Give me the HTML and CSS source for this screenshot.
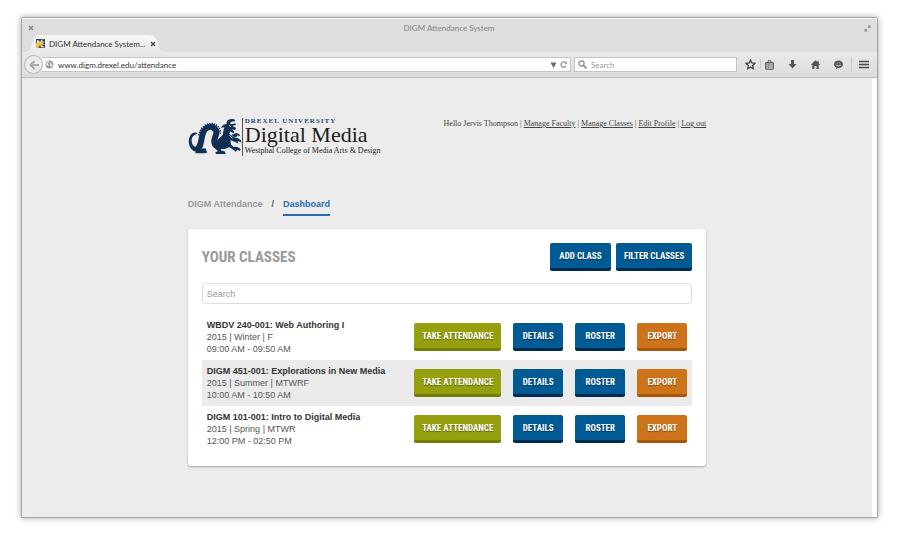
FILE: index.html
```html
<!DOCTYPE html>
<html lang="en">
<head>
<meta charset="utf-8">
<title>DIGM Attendance System</title>
<link rel="stylesheet" href="styles.css">
</head>
<body>
<div class="window">
  <header class="chrome">
    <div class="titlebar">
      <button class="icon-button" aria-label="Close window"><svg width="6" height="6" viewBox="0 0 6 6"><path d="M1 1l4 4M5 1L1 5" stroke="#858585" stroke-width="1.4"/></svg></button>
      <span class="window-title">DIGM Attendance System</span>
      <button class="icon-button" aria-label="Expand window"><svg width="7" height="7" viewBox="0 0 7 7" fill="#929292"><path d="M4 .5h2.500v2.500h-2.500zM.5 4h2.500v2.500h-2.500z"/></svg></button>
    </div>
    <div class="tabs">
      <div class="tab">
        <svg class="tab-shape" viewBox="0 0 138 17" preserveAspectRatio="none"><defs><linearGradient id="tabfill" x2="0" y2="1"><stop stop-color="#f8f8f8"/><stop offset="1" stop-color="#e9e9e9"/></linearGradient></defs><path d="M0 17C5 16 5 12 7 6Q9 0 14 0H123Q129 0 131 6C133 12 133 16 138 17Z" fill="url(#tabfill)"/></svg>
        <svg class="favicon" width="9" height="9" viewBox="0 0 9 9"><rect width="9" height="9" fill="#16458f"/><path d="M0 8C0 5 0 3 2 2.500L4 3 5 1 8 0 6 2 9 3 6.500 4 9 6 5.500 5.500 9 8.500H5L4 6 2.500 9H0Z" fill="#f3c545"/><path d="M1 1l3 1-3 2zM5 4l3 1" fill="#fff5bd"/></svg>
        <span class="tab-label">DIGM Attendance System...</span>
        <button class="icon-button" aria-label="Close tab"><svg width="6" height="6" viewBox="0 0 6 6"><path d="M1 1l4 4M5 1L1 5" stroke="#484848" stroke-width="1.400"/></svg></button>
      </div>
    </div>
    <div class="toolbar">
      <button class="back" aria-label="Back"><svg width="10" height="10" viewBox="0 0 10 10"><path d="M5.500 1L1.500 5l4 4M2 5h8" fill="none" stroke="#aaa" stroke-width="2.200"/></svg></button>
      <div class="address">
        <svg width="9" height="9" viewBox="0 0 9 9"><circle cx="4.500" cy="4.500" r="4" fill="#9b9b9b"/><path d="M3 .8L4 2 2.500 3.500 4 5 3 6 1 4M5.500 2l1.500 1-1 1 2 1-1.500 2L5 6" fill="#eee"/></svg>
        <input class="url" type="text" aria-label="Address" value="www.digm.drexel.edu/attendance">
        <svg width="5" height="6" viewBox="0 0 5 6"><path d="M0 .5h5v1L2.500 6 0 1.500z" fill="#6d6d6d"/></svg>
        <button class="icon-button" aria-label="Reload"><svg width="7" height="7" viewBox="0 0 7 7"><path d="M5.500 1.500A2.700 2.700 0 1 0 6 5" fill="none" stroke="#8796a8" stroke-width="1.300"/><path d="M7 .2v3H4z" fill="#8796a8"/></svg></button>
      </div>
      <div class="web-search">
        <svg width="9" height="9" viewBox="0 0 9 9" fill="none" stroke="#8a8a8a"><circle cx="3.500" cy="3.500" r="2.600" stroke-width="1.200"/><path d="M5.500 5.500l3 3" stroke-width="1.700"/></svg>
        <input type="text" aria-label="Search the web" placeholder="Search">
      </div>
      <div class="tools">
        <button class="icon-button" aria-label="Bookmark"><svg width="11" height="11" viewBox="0 0 11 11"><path d="M5.500 1l1.300 3 3.200.3-2.400 2.200.7 3.200-2.800-1.700-2.800 1.700.7-3.200L1 4.300 4.200 4z" fill="none" stroke="#444" stroke-width="1.300"/></svg></button>
        <button class="icon-button" aria-label="Bookmarks list"><svg width="9" height="10" viewBox="0 0 9 10"><path d="M3 2V.7h3V2" fill="none" stroke="#666"/><rect x=".6" y="2.600" width="7.800" height="6.600" rx=".8" fill="#c8c8c8" stroke="#5c5c5c" stroke-width="1.100"/><path d="M1 4.800h7M1 7h7M3.300 3v6" stroke="#777" stroke-width=".7"/></svg></button>
        <button class="icon-button" aria-label="Downloads"><svg width="9" height="9" viewBox="0 0 9 9"><path d="M3 0h3v4h2.500l-4 4.500-4-4.500H3z" fill="#555"/></svg></button>
        <button class="icon-button" aria-label="Home"><svg width="9" height="9" viewBox="0 0 9 9"><path d="M4.500.3L6.500 2V.8h1.200v2.400L9 4.500 8.200 5.200 7.700 4.800V9H5.500V6h-2v3H1.300V4.800L.8 5.200 0 4.500z" fill="#555"/></svg></button>
        <button class="icon-button" aria-label="Chat"><svg width="9" height="9" viewBox="0 0 9 9"><path d="M4.500.6C7 .6 9 2 9 4.300S7 8 4.500 8L2 9l.3-1.500C.8 7 0 5.900 0 4.300 0 2 2 .6 4.500.6z" fill="#555"/><path d="M2.700 3h1M5.300 3h1M2.200 5q2.300 2 4.600 0" fill="none" stroke="#e5e5e5" stroke-width=".9"/></svg></button>
        <button class="icon-button menu" aria-label="Menu"><svg width="10" height="9" viewBox="0 0 10 9"><path d="M0 1.500h10M0 4.500h10M0 7.500h10" stroke="#4a4a4a" stroke-width="1.700"/></svg></button>
      </div>
    </div>
  </header>

  <div class="viewport">
    <main class="page">
      <div class="masthead">
        <div class="logo">
          <svg class="dragon" width="54" height="38" viewBox="22 36 162 114" role="img" aria-label="Drexel dragon">
            <g fill="#102f53">
              <path d="M51 84C46 76 32 80 27 92C21 107 25 126 38 134L46 137L43 142H75L73 136L64 133L58 121C46 129 34 120 33 106C32 91 42 84 51 84Z"/>
              <path d="M140 72L130 64L120 66L128 56L138 54C136 46 142 40 152 39L161 40L164 45L153 47L147 51L152 55L164 52L165 57L155 60L167 66L163 72L154 70L161 77L158 82L148 76L146 83L158 93L172 97L181 103L182 110L175 106L170 107L174 113L165 109L156 105L150 103L150 112L158 122L170 123L180 129L178 135L170 131L165 137L158 131L146 124L130 130L119 126L122 134L132 136L135 144H106L104 139L112 136L104 128L103 110Z"/>
              <path d="M153 86L168 81L176 85L179 91L171 88L167 93L158 92ZM62 128L74 127L80 140H64Z"/>
            </g>
            <path d="M46 131C62 126 60 105 65 88C70 64 89 57 101 67C117 80 98 94 101 109C104 126 127 124 135 108C141 94 130 84 140 68" fill="none" stroke="#102f53" stroke-width="18"/>
            <path d="M54 88C60 64 76 52 93 53C111 54 120 68 119 83" fill="none" stroke="#102f53" stroke-width="5" stroke-dasharray="4 3"/>
            <path d="M127 72q-6 7-3 15M145 59l6 3M147 88l8 9M151 115l8 4" fill="none" stroke="#ececec" stroke-width="3"/>
          </svg>
          <div class="logo-text">
            <span class="university">DREXEL UNIVERSITY</span>
            <span class="program">Digital Media</span>
            <span class="college">Westphal College of Media Arts &amp; Design</span>
          </div>
        </div>
        <nav class="account">Hello Jervis Thompson | <a href="#faculty">Manage Faculty</a> | <a href="#classes">Manage Classes</a> | <a href="#profile">Edit Profile</a> | <a href="#logout">Log out</a></nav>
      </div>

      <nav class="breadcrumb" aria-label="Breadcrumb">
        <a href="#home">DIGM Attendance</a><span>/</span><a class="current" href="#dashboard" aria-current="page">Dashboard</a>
      </nav>

      <section class="card">
        <div class="card-head">
          <h1>YOUR CLASSES</h1>
          <div class="head-actions">
            <button class="btn blue">ADD CLASS</button>
            <button class="btn blue">FILTER CLASSES</button>
          </div>
        </div>
        <input class="filter" type="text" aria-label="Search classes" placeholder="Search">
        <table class="classes">
          <tr>
            <td><strong>WBDV 240-001: Web Authoring I</strong><br>2015 | Winter | F<br>09:00 AM - 09:50 AM</td>
            <td><div class="actions"><button class="btn green">TAKE ATTENDANCE</button><button class="btn blue">DETAILS</button><button class="btn blue">ROSTER</button><button class="btn orange">EXPORT</button></div></td>
          </tr>
          <tr>
            <td><strong>DIGM 451-001: Explorations in New Media</strong><br>2015 | Summer | MTWRF<br>10:00 AM - 10:50 AM</td>
            <td><div class="actions"><button class="btn green">TAKE ATTENDANCE</button><button class="btn blue">DETAILS</button><button class="btn blue">ROSTER</button><button class="btn orange">EXPORT</button></div></td>
          </tr>
          <tr>
            <td><strong>DIGM 101-001: Intro to Digital Media</strong><br>2015 | Spring | MTWR<br>12:00 PM - 02:50 PM</td>
            <td><div class="actions"><button class="btn green">TAKE ATTENDANCE</button><button class="btn blue">DETAILS</button><button class="btn blue">ROSTER</button><button class="btn orange">EXPORT</button></div></td>
          </tr>
        </table>
      </section>
    </main>
  </div>
</div>
</body>
</html>
```
FILE: styles.css
```css
* { box-sizing: border-box; }

body {
  margin: 0;
  padding: 17px 22px 27px 21px;
  min-height: 100vh;
  display: flex;
  background: #fff;
  font: 9px/12px "Liberation Sans", sans-serif;
  color: #555;
}

button, input { font: inherit; color: inherit; }
svg { display: block; flex: none; }

.window {
  flex: 1;
  display: flex;
  flex-direction: column;
  border: 1px solid #a6a6a6;
  border-radius: 2px 2px 0 0;
  box-shadow: 0 0 6px rgba(0, 0, 0, 0.35);
  min-width: 0;
}

.chrome {
  background: #dedede;
  border-top: 1px solid #f4f4f4;
  font: 8px/12px Lato, sans-serif;
}

.icon-button { border: 0; padding: 0; background: none; }

.titlebar {
  display: flex;
  align-items: center;
  justify-content: space-between;
  height: 16px;
  padding: 2px 6px 0;
  color: #858585;
}

.tabs { display: flex; height: 17px; padding-left: 4px; }

.tab {
  position: relative;
  display: flex;
  align-items: center;
  gap: 4px;
  width: 138px;
  padding: 0 12px 0 10px;
  color: #333;
}

.tab > * { position: relative; }
.tab .tab-shape { position: absolute; inset: 0; width: 100%; height: 100%; }
.tab-label { flex: 1; white-space: nowrap; }

.toolbar {
  display: flex;
  align-items: center;
  height: 26px;
  padding: 0 8px 0 2px;
  background: linear-gradient(#e9e9e9, #dcdcdc);
  border-bottom: 1px solid #bcbcbc;
}

.back {
  position: relative;
  flex: none;
  display: grid;
  place-items: center;
  width: 19px;
  height: 19px;
  padding: 0;
  border: 1px solid #b4b4b4;
  border-radius: 50%;
  background: #ebebeb;
}

.address, .web-search {
  display: flex;
  align-items: center;
  gap: 4px;
  height: 15px;
  padding: 0 3px;
  background: #fff;
  border: 1px solid #c4c4c4;
}

.address { flex: 1; margin-left: -1px; margin-right: 3px; border-left: 0; }
.web-search { flex: 0 1 163px; color: #888; }

.address input, .web-search input {
  flex: 1;
  min-width: 0;
  height: 12px;
  padding: 0;
  border: 0;
  background: none;
  outline: 0;
}

.address input { color: #333; }
input::placeholder { color: #999; opacity: 1; }

.tools { display: flex; align-items: center; gap: 14px; padding-left: 8px; }
.tools > :first-child { margin-right: -10px; padding-right: 4px; border-right: 1px solid #c8cdd2; }
.tools .menu { margin-left: -6px; padding: 3px 0 3px 7px; border-left: 1px solid #c8cdd2; }

.viewport {
  flex: 1;
  background: #ececec;
  border-right: 5px solid #fff;
}

.page { width: 61%; min-width: 518px; margin: 0 auto; padding: 40px 0; }

.masthead { display: flex; justify-content: space-between; align-items: flex-start; }
.logo { display: flex; }

.logo-text {
  display: flex;
  flex-direction: column;
  padding-left: 2px;
  border-left: 1px solid #555;
  font-family: "Liberation Serif", serif;
  color: #1d1d1d;
  white-space: nowrap;
}

.university { font-size: 7px; line-height: 6px; font-weight: bold; letter-spacing: 1px; color: #294b74; }
.program { font-size: 22px; line-height: 22px; }
.college { font-size: 8px; line-height: 10px; }

.account { font: 8px/12px "Liberation Serif", serif; color: #444; }
.account a { color: inherit; }

.breadcrumb {
  display: flex;
  gap: 9px;
  margin-top: 42px;
  font-weight: bold;
}

.breadcrumb a { padding-bottom: 4px; color: #999; text-decoration: none; }
.breadcrumb .current { color: #286bab; border-bottom: 2px solid #286bab; }

.card {
  margin-top: 13px;
  padding: 14px;
  background: #fff;
  border-radius: 3px;
  box-shadow: 0 1px 2px rgba(0, 0, 0, 0.3);
}

.card-head { display: flex; justify-content: space-between; align-items: center; }

h1 {
  margin: 0;
  font: bold 15px/24px "Roboto Condensed", "Liberation Sans Narrow", sans-serif;
  color: #999;
}

.head-actions { display: flex; gap: 5px; }

.btn {
  height: 28px;
  min-width: 61px;
  padding: 0 8px;
  border: 0;
  border-bottom: 3px solid #002b51;
  border-radius: 2px;
  font: bold 9px/12px "Roboto Condensed", "Liberation Sans Narrow", sans-serif;
  color: #fff;
  text-shadow: 0 1px 1px rgba(0, 0, 0, 0.4);
  white-space: nowrap;
}

.blue { background: #005b94; }
.green { background: #96a00f; border-color: #747c08; }
.orange { background: #cd7319; border-color: #a75707; }

.filter {
  display: block;
  width: 100%;
  height: 21px;
  margin: 12px 0 10px;
  padding: 0 4px;
  border: 1px solid #ddd;
  border-radius: 4px;
  background: #fff;
}

.classes { width: 100%; border-collapse: collapse; }
.classes tr:nth-child(even) { background: #ebebeb; }
.classes td { padding: 5px; }
.classes strong { color: #333; }
.actions { display: flex; justify-content: flex-end; gap: 12px; }
.actions .btn { width: 50px; min-width: 0; padding: 0; }
.actions .green { width: 87px; }
```
